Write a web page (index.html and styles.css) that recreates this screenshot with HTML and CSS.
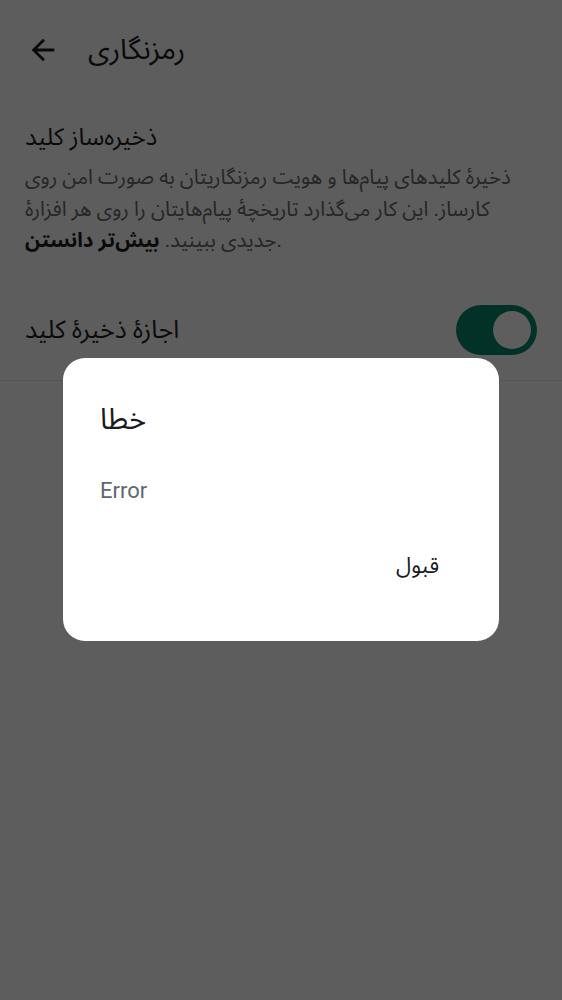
FILE: index.html
```html
<!DOCTYPE html>
<html lang="fa">
<head>
<meta charset="utf-8">
<title>رمزنگاری</title>
<link rel="stylesheet" href="styles.css">
</head>
<body>
<div class="screen">
  <header class="appbar">
    <svg class="back" viewBox="0 0 24 24" width="34" height="34" aria-hidden="true">
      <path d="M20 11H7.83l5.59-5.59L12 4l-8 8 8 8 1.41-1.41L7.83 13H20v-2z" fill="currentColor"/>
    </svg>
    <h1 class="appbar-title">رمزنگاری</h1>
  </header>

  <section class="section">
    <h2 class="section-title">ذخیره‌ساز کلید</h2>
    <p class="section-text">ذخیرهٔ کلیدهای پیام‌ها و هویت رمزنگاریتان به صورت امن روی<br>کارساز. این کار می‌گذارد تاریخچهٔ پیام‌هایتان را روی هر افزارهٔ<br>جدیدی ببینید. <b class="link">بیش‌تر دانستن</b>.</p>
  </section>

  <div class="row">
    <span class="row-label">اجازهٔ ذخیرهٔ کلید</span>
    <span class="switch"><span class="thumb"></span></span>
  </div>
</div>

<div class="scrim">
  <div class="dialog" role="dialog">
    <h3 class="dialog-title">خطا</h3>
    <p class="dialog-text">Error</p>
    <div class="dialog-actions">
      <span class="dialog-btn">قبول</span>
    </div>
  </div>
</div>
</body>
</html>
```

FILE: styles.css
```css
html, body {
  margin: 0;
  padding: 0;
}
body {
  width: 562px;
  height: 1000px;
  background: #ffffff;
  font-family: Roboto, "Noto Sans Arabic", "DejaVu Sans", sans-serif;
  color: #1b1b1f;
  overflow: hidden;
}
.screen {
  height: 1000px;
  background: #fbfbfc;
}
.appbar {
  height: 100px;
  display: flex;
  align-items: center;
  padding-left: 26px;
  gap: 28px;
}
.back {
  display: block;
  color: #1b1b1f;
}
.appbar-title {
  margin: 0;
  font-size: 28.5px;
  font-weight: 400;
  line-height: 36px;
}
.section {
  padding: 22px 25px 0;
}
.section-title {
  margin: 0;
  font-size: 24px;
  font-weight: 400;
  line-height: 30px;
  text-align: left;
}
.section-text {
  margin: 10px 0 0;
  font-size: 20.5px;
  line-height: 31.5px;
  color: #66676c;
  direction: ltr;
  text-align: left;
  white-space: nowrap;
}
.link {
  color: #1b1b1f;
  font-weight: 700;
}
.row {
  display: flex;
  align-items: center;
  justify-content: space-between;
  height: 100px;
  padding: 0 25px;
  margin-top: 23px;
  border-bottom: 1px solid #e6e6e8;
}
.row-label {
  font-size: 25px;
}
.switch {
  width: 81px;
  height: 50px;
  border-radius: 25px;
  background: #06876a;
  display: flex;
  align-items: center;
  justify-content: flex-end;
  padding-right: 6px;
  box-sizing: border-box;
}
.thumb {
  width: 38px;
  height: 38px;
  border-radius: 50%;
  background: #ffffff;
}
.scrim {
  position: fixed;
  inset: 0;
  background: rgba(0, 0, 0, 0.63);
  display: flex;
  align-items: center;
  justify-content: center;
}
.dialog {
  width: 436px;
  box-sizing: border-box;
  background: #ffffff;
  border-radius: 22px;
  padding: 37px 37px 50px;
  margin-top: -2px;
}
.dialog-title {
  margin: 0;
  font-size: 29px;
  font-weight: 400;
  line-height: 48px;
  color: #1b1b1f;
  text-align: left;
}
.dialog-text {
  margin: 32px 0 0;
  font-size: 22px;
  line-height: 32px;
  color: #5f6670;
}
.dialog-actions {
  display: flex;
  justify-content: flex-end;
  margin-top: 34px;
}
.dialog-btn {
  font-size: 22px;
  line-height: 50px;
  padding: 0 23px;
  color: #1b1b1f;
}
```
